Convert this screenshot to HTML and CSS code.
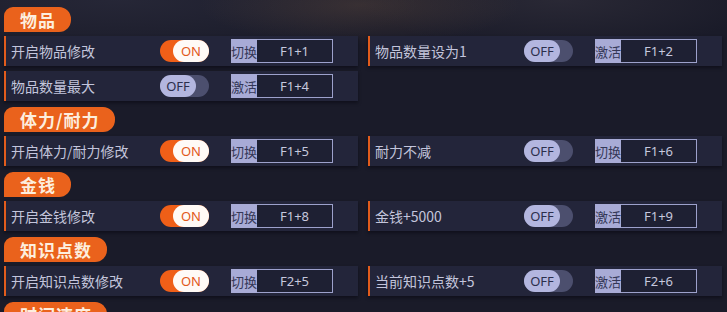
FILE: index.html
```html
<!DOCTYPE html>
<html lang="zh">
<head>
<meta charset="utf-8">
<link rel="stylesheet" href="styles.css">
</head>
<body>
<div class="page">
  <section class="sec">
    <div class="head">物品</div>
    <div class="grid">
      <div class="row"><span class="label">开启物品修改</span><div class="toggle on"><span class="knob">ON</span></div><div class="key"><span class="kl">切换</span><span class="kv">F1+1</span></div></div>
      <div class="row"><span class="label">物品数量设为1</span><div class="toggle off"><span class="knob">OFF</span></div><div class="key"><span class="kl">激活</span><span class="kv">F1+2</span></div></div>
      <div class="row"><span class="label">物品数量最大</span><div class="toggle off"><span class="knob">OFF</span></div><div class="key"><span class="kl">激活</span><span class="kv">F1+4</span></div></div>
    </div>
  </section>
  <section class="sec">
    <div class="head">体力/耐力</div>
    <div class="grid">
      <div class="row"><span class="label">开启体力/耐力修改</span><div class="toggle on"><span class="knob">ON</span></div><div class="key"><span class="kl">切换</span><span class="kv">F1+5</span></div></div>
      <div class="row"><span class="label">耐力不减</span><div class="toggle off"><span class="knob">OFF</span></div><div class="key"><span class="kl">切换</span><span class="kv">F1+6</span></div></div>
    </div>
  </section>
  <section class="sec">
    <div class="head">金钱</div>
    <div class="grid">
      <div class="row"><span class="label">开启金钱修改</span><div class="toggle on"><span class="knob">ON</span></div><div class="key"><span class="kl">切换</span><span class="kv">F1+8</span></div></div>
      <div class="row"><span class="label">金钱+5000</span><div class="toggle off"><span class="knob">OFF</span></div><div class="key"><span class="kl">激活</span><span class="kv">F1+9</span></div></div>
    </div>
  </section>
  <section class="sec">
    <div class="head">知识点数</div>
    <div class="grid">
      <div class="row"><span class="label">开启知识点数修改</span><div class="toggle on"><span class="knob">ON</span></div><div class="key"><span class="kl">切换</span><span class="kv">F2+5</span></div></div>
      <div class="row"><span class="label">当前知识点数+5</span><div class="toggle off"><span class="knob">OFF</span></div><div class="key"><span class="kl">激活</span><span class="kv">F2+6</span></div></div>
    </div>
  </section>
  <section class="sec">
    <div class="head">时间速度</div>
  </section>
</div>
</body>
</html>
```
FILE: styles.css
```css
* { box-sizing: border-box; }
html, body { margin: 0; padding: 0; }
body {
  width: 727px;
  height: 312px;
  overflow: hidden;
  background:
    radial-gradient(ellipse 160px 40px at 360px 5px, rgba(90,70,60,0.45), rgba(90,70,60,0) 100%),
    radial-gradient(ellipse 200px 50px at 560px 0px, rgba(70,65,75,0.35), rgba(70,65,75,0) 100%),
    radial-gradient(ellipse 300px 60px at 120px 0px, rgba(60,60,80,0.35), rgba(60,60,80,0) 100%),
    #1a1b29;
  font-family: "Noto Sans CJK SC", "Noto Sans", sans-serif;
}
.page {
  padding: 7px 5px 0 4px;
  display: flex;
  flex-direction: column;
  gap: 6px;
}
.sec {
  display: flex;
  flex-direction: column;
  align-items: flex-start;
  gap: 4px;
}
.head {
  height: 25px;
  line-height: 25px;
  padding: 0 15px 0 16px;
  background: #ea621c;
  color: #fdeede;
  font-size: 17px;
  font-weight: 700;
  letter-spacing: 1px;
  border-radius: 9px 12px 12px 0;
}
.grid {
  width: 100%;
  display: grid;
  grid-template-columns: 354px 354px;
  column-gap: 10px;
  row-gap: 5px;
}
.row {
  height: 30px;
  display: flex;
  align-items: center;
  background: #23253a;
  border-left: 2px solid #e25c1c;
  padding: 0 25px 0 5px;
  box-shadow: 0 2px 3px rgba(8,8,16,0.55);
}
.label {
  flex: 1;
  color: #c3c5dc;
  font-size: 14px;
  white-space: nowrap;
}
.toggle {
  width: 49px;
  height: 22px;
  border-radius: 11px;
  display: flex;
  margin-right: 22px;
}
.toggle.on { background: #ef5f18; justify-content: flex-end; }
.toggle.off { background: #4c4f6e; justify-content: flex-start; }
.knob {
  width: 36px;
  height: 22px;
  border-radius: 11px;
  display: flex;
  align-items: center;
  justify-content: center;
  font-family: "Noto Sans", sans-serif;
  font-size: 13px;
}
.on .knob { background: #fffaf6; color: #e2581a; }
.off .knob { background: #b3b6df; color: #2c2f4c; }
.key {
  width: 102px;
  height: 24px;
  display: flex;
  border: 1px solid #9da1cc;
  background: #1e2033;
}
.kl {
  width: 26px;
  margin: -1px 0 -1px -1px;
  background: #a8abd6;
  color: #343756;
  font-size: 13px;
  display: flex;
  align-items: center;
  justify-content: center;
  white-space: nowrap;
}
.kv {
  flex: 1;
  display: flex;
  align-items: center;
  justify-content: center;
  color: #c6c8de;
  font-family: "Noto Sans", sans-serif;
  font-size: 13px;
}
```
